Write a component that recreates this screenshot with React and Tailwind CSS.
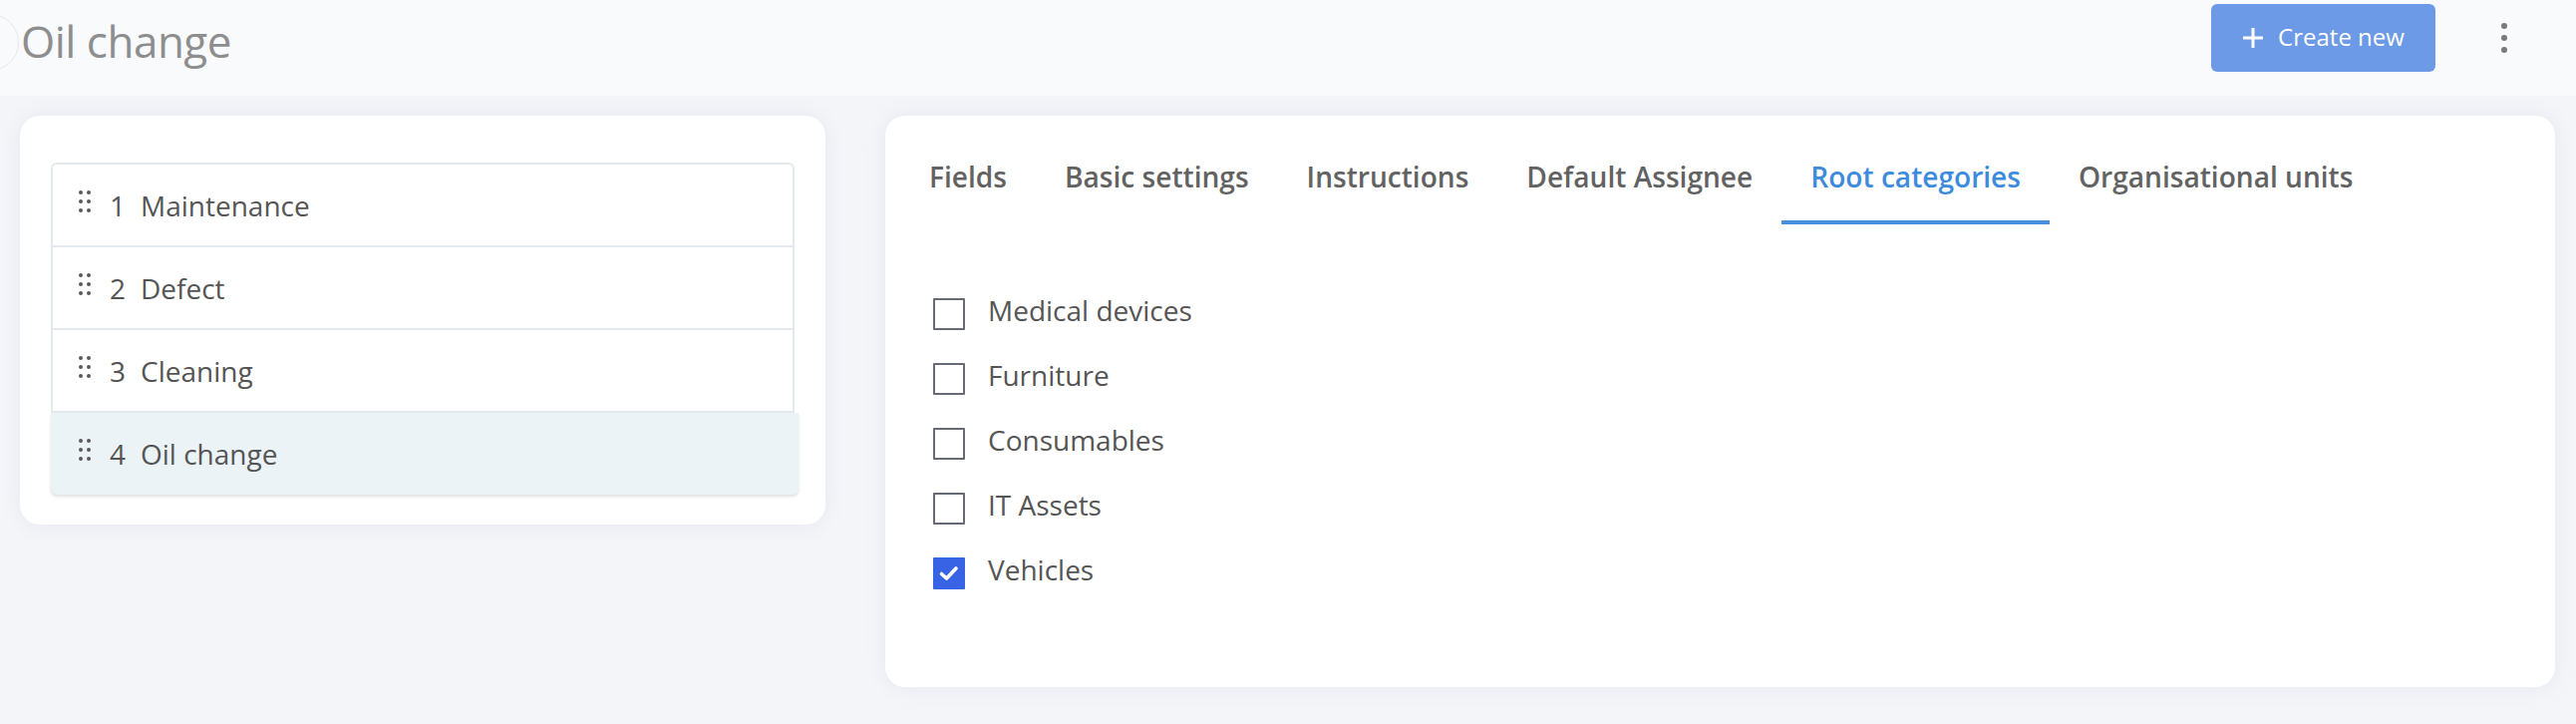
import React from "react";

function Handle() {
  return (
    <svg width="12" height="22" viewBox="0 0 12 22" className="shrink-0 -mt-[8px]" fill="#5a5a5a">
      <circle cx="2" cy="2" r="2" />
      <circle cx="10" cy="2" r="2" />
      <circle cx="2" cy="11" r="2" />
      <circle cx="10" cy="11" r="2" />
      <circle cx="2" cy="20" r="2" />
      <circle cx="10" cy="20" r="2" />
    </svg>
  );
}

function Item({ n, label, active }) {
  return (
    <div
      className={
        active
          ? "flex items-center h-[82px] pl-[28px] bg-[#ebf3f6] rounded-b-[6px] -ml-[2px] -mr-[6px] shadow-[0_2px_3px_rgba(0,0,0,0.12)]"
          : "flex items-center h-[83px] pl-[26px] border-b-2 border-[#e4e9ed]"
      }
    >
      <Handle />
      <span className="ml-[19px] text-[28px] text-[#555555] leading-none">{n}</span>
      <span className="ml-[15px] text-[28px] text-[#555555] leading-none">{label}</span>
    </div>
  );
}

function Check({ label, checked }) {
  return (
    <div className="flex items-center h-[65px]">
      {checked ? (
        <div className="w-[32px] h-[32px] bg-[#3863e4] rounded-[1px] flex items-center justify-center">
          <svg width="32" height="32" viewBox="0 0 32 32" fill="none">
            <path d="M8.5 16.5 L13.5 21 L23 11" stroke="white" strokeWidth="3.6" strokeLinecap="round" strokeLinejoin="round" />
          </svg>
        </div>
      ) : (
        <div className="w-[32px] h-[32px] border-[2.5px] border-[#656a75] rounded-[1px] bg-white" />
      )}
      <span className="ml-[23px] text-[28px] text-[#555555] leading-none -mt-[7px]">{label}</span>
    </div>
  );
}

export default function App() {
  const tabs = [
    "Fields",
    "Basic settings",
    "Instructions",
    "Default Assignee",
    "Root categories",
    "Organisational units",
  ];
  return (
    <div className="min-h-screen w-full bg-[#f4f5f9] font-['Open_Sans',sans-serif] overflow-hidden">
      <header className="h-[96px] bg-[#f9fafc] flex items-center">
        <div className="w-[57px] h-[57px] rounded-full border-[1.5px] border-[#e6e7ea] -ml-[38px] shrink-0 -mt-[12px]" />
        <h1 className="ml-[2px] text-[44px] text-[#8e8e8e] leading-none -mt-[14px] tracking-[-0.5px]">Oil change</h1>
        <div className="flex-1" />
        <button className="w-[225px] h-[68px] rounded-[6px] bg-[#6c9ae6] flex items-center justify-center text-white text-[24px] -mt-[20px] ml-[4px]">
          <svg width="22" height="22" viewBox="0 0 22 22" className="mr-[14px]">
            <path d="M11 1 V21 M1 11 H21" stroke="white" strokeWidth="3" />
          </svg>
          <span className="leading-none -mt-[3px]">Create new</span>
        </button>
        <div className="ml-[66px] mr-[69px] flex flex-col gap-[6px] -mt-[20px]">
          <span className="w-[6px] h-[6px] rounded-full bg-[#7a7a7a]" />
          <span className="w-[6px] h-[6px] rounded-full bg-[#7a7a7a]" />
          <span className="w-[6px] h-[6px] rounded-full bg-[#7a7a7a]" />
        </div>
      </header>

      <main className="flex items-start pt-[20px] pl-[20px] pr-[21px] gap-[60px]">
        <section className="w-[808px] shrink-0 bg-white rounded-[20px] shadow-[0_0_24px_rgba(20,30,60,0.06)] pt-[47px] pb-[30px] px-[31px]">
          <div className="border-2 border-[#e4e9ed] border-b-0 rounded-[6px]">
            <Item n="1" label="Maintenance" />
            <Item n="2" label="Defect" />
            <Item n="3" label="Cleaning" />
            <Item n="4" label="Oil change" active />
          </div>
        </section>

        <section className="flex-1 h-[573px] bg-white rounded-[20px] shadow-[0_0_24px_rgba(20,30,60,0.06)] px-[15px]">
          <nav className="flex">
            {tabs.map((t) => {
              const active = t === "Root categories";
              return (
                <div
                  key={t}
                  className={
                    active
                      ? "px-[29px] pt-[40px] pb-[23px] border-b-4 border-[#4790dc] text-[28.1px] font-semibold text-[#3d8bdc] leading-[42px]"
                      : "px-[29px] pt-[40px] pb-[23px] border-b-4 border-transparent text-[28.1px] font-semibold text-[#626262] leading-[42px]"
                  }
                >
                  {t}
                </div>
              );
            })}
          </nav>
          <div className="pt-[57px] pl-[33px]">
            <Check label="Medical devices" />
            <Check label="Furniture" />
            <Check label="Consumables" />
            <Check label="IT Assets" />
            <Check label="Vehicles" checked />
          </div>
        </section>
      </main>
    </div>
  );
}
